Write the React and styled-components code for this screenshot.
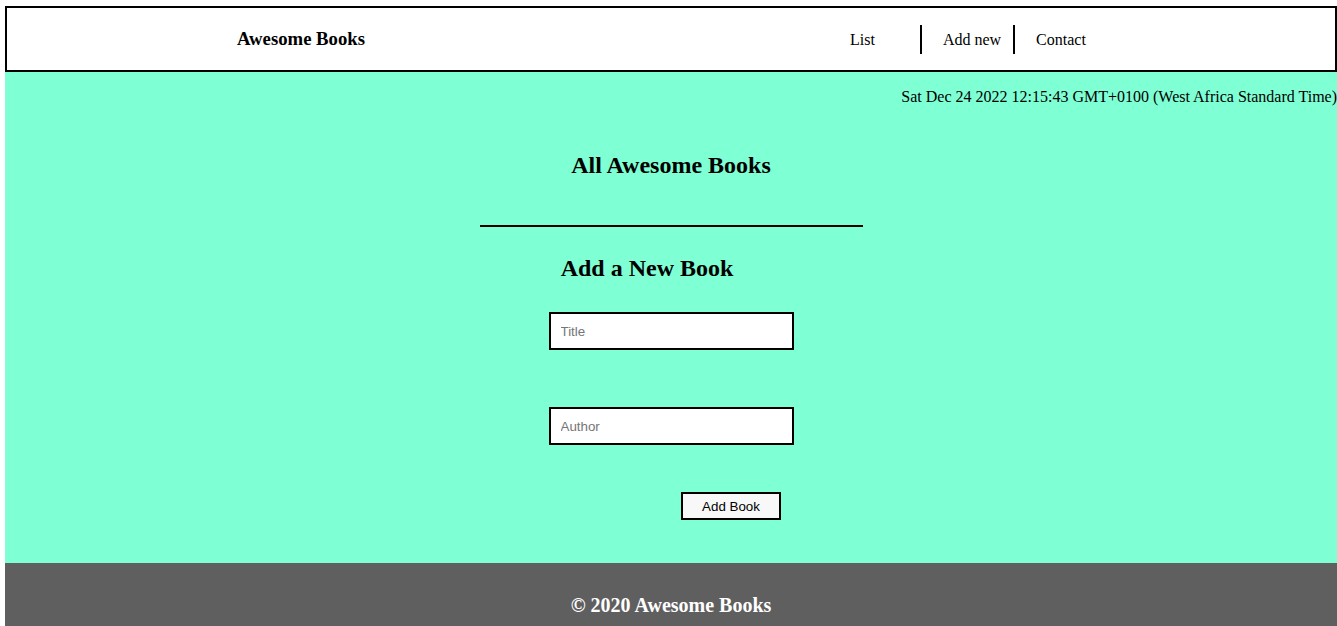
import React from 'react';
import styled, {createGlobalStyle} from "styled-components";

const GlobalStyle = createGlobalStyle`
    body {
        margin: 6px 0 0 5px;
        font-family: "Liberation Serif", "Times New Roman", serif;
        color: #000;
        overflow: hidden;
    }
`;

const navLinks = [
    {id: 1, title: 'List', pad: '0 45px 0 0'},
    {id: 2, title: 'Add new', pad: '0 12px 0 21px', bordered: true},
    {id: 3, title: 'Contact', pad: '0 0 0 21px'},
];

function App() {
    return (
        <>
            <GlobalStyle />
            <Header>
                <Logo>Awesome Books</Logo>
                <NavList>
                    {navLinks.map((item) => (
                        <NavItem key={item.id} $pad={item.pad} $bordered={item.bordered}>
                            {item.title}
                        </NavItem>
                    ))}
                </NavList>
            </Header>
            <Main>
                <DateLine>Sat Dec 24 2022 12:15:43 GMT+0100 (West Africa Standard Time)</DateLine>
                <Title>All Awesome Books</Title>
                <Divider />
                <FormTitle>Add a New Book</FormTitle>
                <BookForm onSubmit={(e) => e.preventDefault()}>
                    <Field type="text" placeholder="Title" />
                    <Field type="text" placeholder="Author" />
                    <SubmitButton type="submit">Add Book</SubmitButton>
                </BookForm>
            </Main>
            <Footer>
                <h3>© 2020 Awesome Books</h3>
            </Footer>
        </>
    );
}

const Header = styled.header`
    height: 62px;
    border: 2px solid #000;
    background: #fff;
    display: flex;
    align-items: center;
    padding-left: 230px;
`;

const Logo = styled.h3`
    margin: 0;
    font-size: 18.72px;
    font-weight: bold;
`;

const NavList = styled.ul`
    list-style: none;
    margin: 0 0 0 485px;
    padding: 0;
    display: flex;
    align-items: center;
`;

const NavItem = styled.li`
    font-size: 16px;
    height: 29px;
    line-height: 29px;
    padding: ${({$pad}) => $pad};
    border-left: ${({$bordered}) => ($bordered ? '2px solid #000' : 'none')};
    border-right: ${({$bordered}) => ($bordered ? '2px solid #000' : 'none')};
`;

const Main = styled.main`
    background: #7fffd4;
    display: flex;
    flex-direction: column;
    align-items: center;
    padding: 16px 0 43px;
`;

const DateLine = styled.p`
    margin: 0;
    align-self: flex-end;
    font-size: 16px;
    white-space: nowrap;
`;

const Title = styled.h2`
    margin: 46px 0 0;
    font-size: 24px;
`;

const Divider = styled.div`
    width: 383px;
    height: 2px;
    background: #000;
    margin-top: 46px;
`;

const FormTitle = styled.h2`
    margin: 28px 48px 0 0;
    font-size: 24px;
`;

const BookForm = styled.form`
    display: flex;
    flex-direction: column;
    align-items: center;
    margin-top: 30px;
`;

const Field = styled.input`
    width: 245px;
    height: 38px;
    box-sizing: border-box;
    border: 2px solid #000;
    padding: 0 10px;
    font-family: "Liberation Sans", Arial, sans-serif;
    font-size: 13.33px;
    background: #fff;
    outline: none;
    &::placeholder {
        color: #757575;
    }
    & + & {
        margin-top: 57px;
    }
`;

const SubmitButton = styled.button`
    width: 100px;
    height: 28px;
    box-sizing: border-box;
    border: 2px solid #000;
    background: #f8f8f8;
    font-family: "Liberation Sans", Arial, sans-serif;
    font-size: 13.33px;
    color: #000;
    margin: 47px 0 0 120px;
    padding: 0;
`;

const Footer = styled.footer`
    background: #5f5f5f;
    color: #fff;
    text-align: center;
    padding: 31px 0 20px;
    h3 {
        margin: 0;
        font-size: 20px;
    }
`;

export default App;
